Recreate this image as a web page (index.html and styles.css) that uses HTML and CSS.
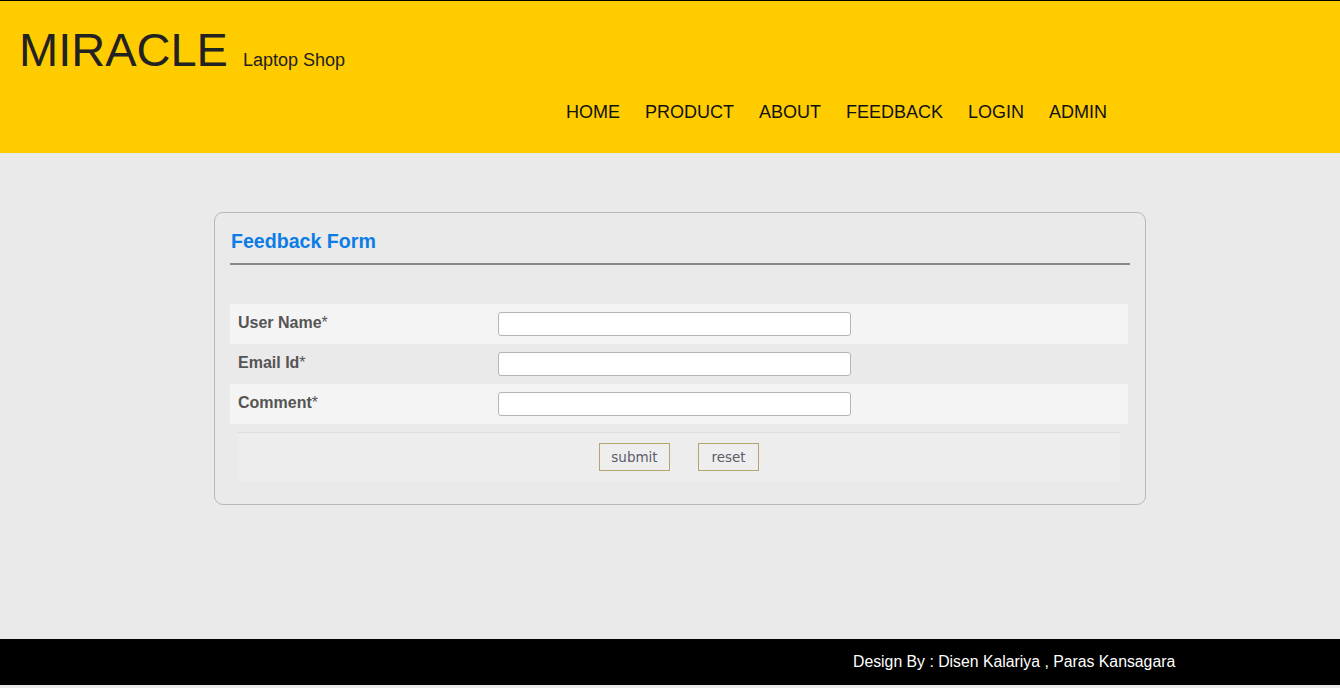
FILE: index.html
```html
<!DOCTYPE html>
<html>
<head>
<meta charset="utf-8">
<title>Miracle Laptop Shop - Feedback</title>
<link rel="stylesheet" href="styles.css">
</head>
<body>
<header class="header">
  <div class="brand">
    <span class="brand-name">MIRACLE</span>
    <span class="brand-tag">Laptop Shop</span>
  </div>
  <nav class="nav">
    <a href="#">HOME</a>
    <a href="#">PRODUCT</a>
    <a href="#">ABOUT</a>
    <a href="#">FEEDBACK</a>
    <a href="#">LOGIN</a>
    <a href="#">ADMIN</a>
  </nav>
</header>
<main class="main">
  <section class="card">
    <h2 class="card-title">Feedback Form</h2>
    <div class="rule"></div>
    <div class="rows">
      <div class="row alt">
        <label class="label">User Name<span class="req">*</span></label>
        <input class="field" type="text">
      </div>
      <div class="row">
        <label class="label">Email Id<span class="req">*</span></label>
        <input class="field" type="text">
      </div>
      <div class="row alt">
        <label class="label">Comment<span class="req">*</span></label>
        <input class="field" type="text">
      </div>
    </div>
    <div class="actions">
      <button class="btn btn-submit" type="button">submit</button>
      <button class="btn btn-reset" type="button">reset</button>
    </div>
  </section>
</main>
<footer class="footer">Design By : Disen Kalariya , Paras Kansagara</footer>
</body>
</html>
```
FILE: styles.css
```css
html, body {
  margin: 0;
  padding: 0;
}
body {
  background: #eaeaea;
  font-family: "Liberation Sans", Arial, sans-serif;
}
.header {
  border-top: 1px solid #000;
  background: #ffcc00;
  height: 153px;
  box-sizing: border-box;
  display: flex;
  flex-direction: column;
}
.brand {
  padding-left: 19px;
  padding-top: 21px;
  display: flex;
  align-items: baseline;
  height: 56px;
}
.brand-name {
  font-size: 47px;
  line-height: 56px;
  color: #222;
}
.brand-tag {
  font-size: 18px;
  color: #222;
  margin-left: 15px;
}
.nav {
  display: flex;
  gap: 25px;
  padding-left: 566px;
  margin-top: 21px;
}
.nav a {
  color: #111;
  text-decoration: none;
  font-size: 18px;
  line-height: 26px;
}
.main {
  height: 486px;
  padding-top: 59px;
  box-sizing: border-box;
}
.card {
  margin-left: 214px;
  width: 932px;
  box-sizing: border-box;
  height: 293px;
  border: 1px solid #b8b8b8;
  border-radius: 9px;
  padding: 15px 15px 0 15px;
}
.card-title {
  margin: 0;
  font-size: 19.6px;
  line-height: 26px;
  font-weight: bold;
  color: #0c7ce6;
  padding-left: 1px;
}
.rule {
  margin-top: 9px;
  height: 2px;
  background: #888;
}
.rows {
  margin-top: 39px;
  width: 898px;
}
.row {
  height: 40px;
  display: flex;
  align-items: center;
  background: #eaeaea;
}
.row.alt {
  background: #f4f4f4;
}
.label {
  width: 268px;
  box-sizing: border-box;
  padding-left: 8px;
  font-size: 16px;
  font-weight: bold;
  color: #555;
  margin-top: -3px;
}
.req {
  font-weight: normal;
}
.field {
  width: 353px;
  height: 24px;
  box-sizing: border-box;
  border: 1px solid #b5b5b5;
  border-radius: 3px;
  background: #fff;
  margin: 0;
  padding: 2px 4px;
}
.actions {
  margin: 8px 8px 0 8px;
  width: 882px;
  height: 50px;
  box-sizing: border-box;
  border-top: 1px solid #dddddd;
  background: #ededed;
  display: flex;
  justify-content: center;
  align-items: flex-start;
  gap: 28px;
  padding-top: 10px;
}
.btn {
  height: 28px;
  box-sizing: border-box;
  border: 1px solid #b3a56c;
  background: #eeeeee;
  color: #5c5c68;
  font-family: "DejaVu Sans", Tahoma, sans-serif;
  font-size: 13.5px;
  padding: 0;
  margin: 0;
}
.btn-submit {
  width: 71px;
}
.btn-reset {
  width: 61px;
}
.footer {
  background: #000;
  color: #fff;
  height: 46px;
  line-height: 46px;
  font-size: 15.8px;
  padding-left: 853px;
}
```
